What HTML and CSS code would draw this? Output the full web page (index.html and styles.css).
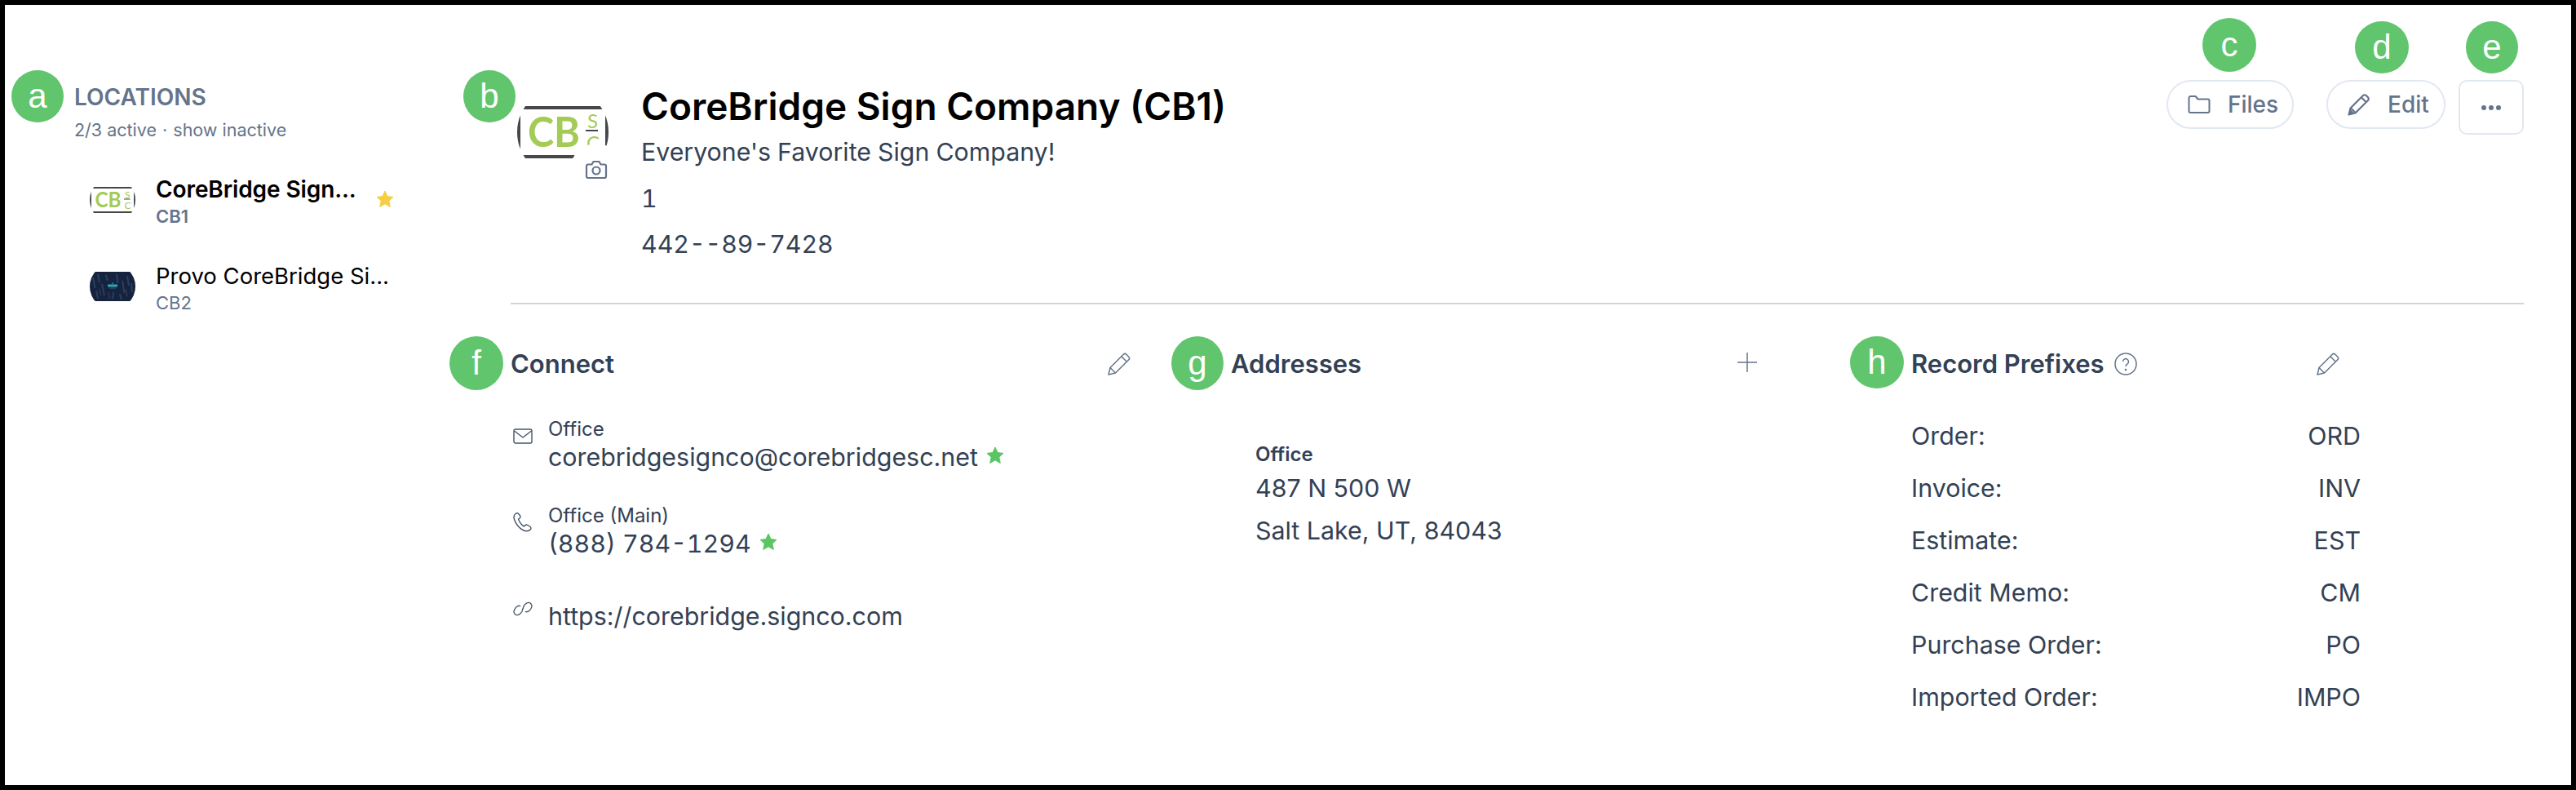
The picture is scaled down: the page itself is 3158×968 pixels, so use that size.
FILE: index.html
```html
<!doctype html>
<html>
<head>
<title>Locations</title>
<meta charset="utf-8">
<link rel="stylesheet" href="styles.css">
</head>
<body>
<svg class="defs" width="0" height="0">
	<defs>
		<clipPath id="round"><circle cx="56" cy="56" r="56"></circle></clipPath>
		<symbol id="logo-cb" viewBox="0 0 112 112">
			<g clip-path="url(#round)">
				<rect x="2" y="26" width="108" height="60" fill="#fff" stroke="#45474a" stroke-width="4"></rect>
				<text x="13" y="74" class="logo-big" textLength="64" lengthAdjust="spacingAndGlyphs">CB</text>
				<text x="86" y="51" class="logo-small">S</text>
				<rect x="84" y="53" width="15" height="2" fill="#45474a"></rect>
				<text x="85" y="78" class="logo-small">C</text>
			</g>
		</symbol>
		<symbol id="pencil" viewBox="0 0 28 28">
			<path d="M1 27l2-8.500L19.300 2.200a2.500 2.500 0 0 1 3.500 0l3 3a2.500 2.500 0 0 1 0 3.500L9.500 25zM3 18.500l6.500 6.500M16.800 4.700l6.500 6.500" fill="none" stroke="currentColor" stroke-width="1.500" stroke-linejoin="round"></path>
		</symbol>
		<symbol id="pencil-solid" viewBox="0 0 28 28">
			<path d="M1.500 26.500l2-8L19 3a2.600 2.600 0 0 1 3.700 0l2.300 2.300a2.600 2.600 0 0 1 0 3.700L9.500 24.500zM4 18.500l5.500 5.500M16.800 5.200l6 6" fill="none" stroke="currentColor" stroke-width="2.200" stroke-linejoin="round"></path>
			<path d="M2 26l1.500-6 4.500 4.500z" fill="currentColor"></path>
		</symbol>
		<symbol id="star" viewBox="0 0 22 22">
			<path d="M11 1l3 6.600 7 .8-5.200 4.800 1.500 7.200L11 16.800l-6.300 3.600 1.500-7.200L1 8.400l7-.8z" fill="currentColor" stroke="currentColor" stroke-linejoin="round"></path>
		</symbol>
	</defs>
</svg>

<div class="frame">
	<span class="badge badge-a">a</span>
	<span class="badge badge-b">b</span>
	<span class="badge badge-c">c</span>
	<span class="badge badge-d">d</span>
	<span class="badge badge-e">e</span>
	<span class="badge badge-f">f</span>
	<span class="badge badge-g">g</span>
	<span class="badge badge-h">h</span>

	<aside class="sidebar">
		<h2 class="side-title">LOCATIONS</h2>
		<p class="side-sub">2/3 active <span class="dot">·</span> show inactive</p>

		<div class="loc">
			<svg class="loc-logo"><use href="#logo-cb"></use></svg>
			<div class="loc-text">
				<div class="loc-name loc-current">CoreBridge Sign...</div>
				<div class="loc-code loc-code-current">CB1</div>
			</div>
			<svg class="loc-star"><use href="#star"></use></svg>
		</div>

		<div class="loc">
			<svg class="loc-logo" viewBox="0 0 112 112">
				<g clip-path="url(#round)">
					<rect x="0" y="20" width="112" height="72" fill="#15233f"></rect>
					<path d="M8 34l5 26M20 26l4 20M30 50l6 28M40 28l3 14M66 26l3 22M80 42l5 30M92 30l4 24M102 48l2 22M16 66l4 20M58 70l-2 16M74 74l3 14" stroke="#2a3f5e" stroke-width="4"></path>
					<path d="M24 62l3 16M46 70l3 16M88 62l4 18" stroke="#3f3446" stroke-width="3"></path>
					<rect x="44" y="51" width="24" height="6" fill="#35a3b3"></rect>
					<rect x="48" y="59" width="16" height="2" fill="#24697c"></rect>
					<rect x="54" y="46" width="4" height="4" fill="#24697c"></rect>
				</g>
			</svg>
			<div class="loc-text">
				<div class="loc-name">Provo CoreBridge Si...</div>
				<div class="loc-code">CB2</div>
			</div>
		</div>
	</aside>

	<main class="content">
		<header class="head">
			<div class="head-logo">
				<svg class="big-logo"><use href="#logo-cb"></use></svg>
				<span class="camera">
					<svg width="28" height="24" viewBox="0 0 28 24" fill="none" stroke="currentColor" stroke-width="2.200" stroke-linejoin="round"><path d="M2 7.500a2 2 0 0 1 2-2h4.500l2-3.500h7l2 3.500H24a2 2 0 0 1 2 2V20a2 2 0 0 1-2 2H4a2 2 0 0 1-2-2z"></path><circle cx="14" cy="13" r="4.500"></circle></svg>
				</span>
			</div>
			<div class="head-text">
				<h1>CoreBridge Sign Company (CB1)</h1>
				<p>Everyone's Favorite Sign Company!</p>
				<p>1</p>
				<p>442--89-7428</p>
			</div>
			<div class="actions">
				<a class="pill pill-files" href="#">
					<svg width="28" height="22" viewBox="0 0 28 22" fill="none" stroke="currentColor" stroke-width="2" stroke-linejoin="round"><path d="M1.500 3a2 2 0 0 1 2-2h6l3 3.500h12a2 2 0 0 1 2 2V19a2 2 0 0 1-2 2h-21a2 2 0 0 1-2-2z"></path></svg>
					Files
				</a>
				<a class="pill pill-edit" href="#">
					<svg width="28" height="28"><use href="#pencil-solid"></use></svg>
					Edit
				</a>
				<a class="more" href="#"><i></i><i></i><i></i></a>
			</div>
		</header>

		<hr class="rule">

		<div class="cols">
			<section class="col-connect">
				<div class="col-head">
					<h3>Connect</h3>
					<svg class="tool" width="28" height="28"><use href="#pencil"></use></svg>
				</div>
				<div class="contact contact-first">
					<svg class="contact-icon" width="24" height="24" viewBox="0 0 24 24" fill="none" stroke="currentColor" stroke-width="1.400" stroke-linejoin="round"><rect x="1" y="4" width="22" height="17" rx="2"></rect><path d="M1.500 6l10.500 8 10.500-8"></path></svg>
					<div>
						<div class="contact-label">Office</div>
						<div class="contact-value">corebridgesignco@corebridgesc.net <svg class="mini-star"><use href="#star"></use></svg></div>
					</div>
				</div>
				<div class="contact">
					<svg class="contact-icon" width="24" height="24" viewBox="0 0 24 24" fill="none" stroke="currentColor" stroke-width="1.400" stroke-linejoin="round"><path d="M3 1.500c-2 1.500-2.500 4-1.500 7 1.500 5 6 11 11.500 13.500 3 1 6 1 8-1 1.500-1.500 1-3-.5-4l-2.500-1.500c-1.500-.8-2.500-.5-3.500.5l-1 1c-3-1.500-5.500-5-7-9l1.500-1c1-.8 1.200-1.800.7-3L7 2c-.8-1.500-2.500-1.500-4-.5z"></path></svg>
					<div>
						<div class="contact-label">Office (Main)</div>
						<div class="contact-value contact-num">(888) 784-1294 <svg class="mini-star"><use href="#star"></use></svg></div>
					</div>
				</div>
				<div class="contact">
					<svg class="contact-icon" width="24" height="24" viewBox="0 0 26 24" fill="none" stroke="currentColor" stroke-width="1.400"><path d="M10 8.500c-2-1-4.500-.5-6.500 2C1 13.500.5 17 2.500 19s5 1.500 7.500-1c2-2 3-4.500 2.500-6.500"></path><path d="M16 15.500c2 1 4.500.5 6.500-2C25 10.500 25.500 7 23.500 5s-5-1.500-7.500 1c-2 2-3 4.500-2.500 6.500"></path></svg>
					<div class="contact-value contact-plain">https://corebridge.signco.com</div>
				</div>
			</section>

			<section class="col-address">
				<div class="col-head">
					<h3>Addresses</h3>
					<svg class="tool" width="24" height="24" viewBox="0 0 24 24" stroke="currentColor" stroke-width="1.500"><path d="M12 0v24M0 12h24"></path></svg>
				</div>
				<div class="address">
					<div class="address-label">Office</div>
					<div>487 N 500 W</div>
					<div>Salt Lake, UT, 84043</div>
				</div>
			</section>

			<section class="col-prefix">
				<div class="col-head">
					<h3>Record Prefixes
						<svg class="help" width="28" height="28" viewBox="0 0 28 28" fill="none" stroke="currentColor" stroke-width="1.500"><circle cx="14" cy="14" r="13"></circle><path d="M10.500 11a3.500 3.500 0 1 1 5.500 3c-1.300.8-2 1.500-2 3"></path><circle cx="14" cy="21" r=".6"></circle></svg>
					</h3>
					<svg class="tool" width="28" height="28"><use href="#pencil"></use></svg>
				</div>
				<dl class="prefixes">
					<div><dt>Order:</dt><dd>ORD</dd></div>
					<div><dt>Invoice:</dt><dd>INV</dd></div>
					<div><dt>Estimate:</dt><dd>EST</dd></div>
					<div><dt>Credit Memo:</dt><dd>CM</dd></div>
					<div><dt>Purchase Order:</dt><dd>PO</dd></div>
					<div><dt>Imported Order:</dt><dd>IMPO</dd></div>
				</dl>
			</section>
		</div>
	</main>
</div>
</body>
</html>
```

FILE: styles.css
```css
* {
	box-sizing: border-box;
}
body {
	margin: 0;
	font-family: "Inter", "Liberation Sans", sans-serif;
	color: #334155;
	background: #fff;
}
h1, h2, h3, p, dl, dd {
	margin: 0;
}
a {
	color: inherit;
	text-decoration: none;
}
.defs {
	position: absolute;
}
.frame {
	position: relative;
	display: flex;
	height: 968px;
	border: 6px solid #000;
	background: #fff;
}

/* green letters laid over the screenshot */
.badge {
	position: absolute;
	display: flex;
	align-items: center;
	justify-content: center;
	width: 64px;
	height: 64px;
	border-radius: 50%;
	background: #60c56c;
	color: #fff;
	font-family: "Liberation Sans", sans-serif;
	font-size: 42px;
	z-index: 2;
}
.badge-a { left: 8px; top: 80px; }
.badge-b { left: 562px; top: 80px; }
.badge-c { left: 2694px; top: 16px; width: 66px; height: 66px; }
.badge-d { left: 2881px; top: 20px; width: 66px; }
.badge-e { left: 3017px; top: 20px; }
.badge-f { left: 545px; top: 406px; width: 66px; height: 66px; }
.badge-g { left: 1430px; top: 406px; height: 66px; }
.badge-h { left: 2262px; top: 406px; width: 66px; }

/* left column */
.sidebar {
	flex: none;
	width: 620px;
	padding: 96px 0 0 85px;
}
.side-title {
	font-size: 28px;
	line-height: 34px;
	font-weight: 600;
	color: #64748b;
}
.side-sub {
	margin-top: 9px;
	font-size: 21.500px;
	line-height: 28px;
	color: #64748b;
}
.dot {
	margin: 0 1px;
}
.loc {
	display: flex;
	margin: 44px 0 0 19px;
}
.loc + .loc {
	margin-top: 44px;
}
.loc-logo {
	flex: none;
	width: 56px;
	height: 56px;
}
.loc-text {
	margin: -2px 0 0 25px;
}
.loc-name {
	font-size: 27.500px;
	line-height: 34px;
	color: #000;
}
.loc-current {
	font-size: 28px;
	font-weight: 600;
	letter-spacing: -.1px;
}
.loc-code {
	margin-top: 2px;
	font-size: 22px;
	line-height: 28px;
	color: #64748b;
}
.loc-code-current {
	font-weight: 600;
}
.loc-star {
	flex: none;
	width: 22px;
	height: 22px;
	margin: 16px 0 0 24px;
	color: #f6ce46;
}
.logo-big {
	font-family: "Lato", sans-serif;
	font-weight: 700;
	font-size: 52px;
	fill: #a4cb55;
}
.logo-small {
	font-family: "Lato", sans-serif;
	font-size: 24px;
	fill: #a4cb55;
}

/* right side */
.content {
	flex: 1;
	min-width: 0;
	padding: 92px 58px 0 0;
}
.head {
	display: flex;
	align-items: flex-start;
	padding-left: 8px;
}
.head-logo {
	position: relative;
	flex: none;
	width: 112px;
	height: 112px;
	margin-top: 8px;
}
.big-logo {
	width: 112px;
	height: 112px;
}
.camera {
	position: absolute;
	left: 65px;
	top: 70px;
	display: flex;
	align-items: center;
	justify-content: center;
	width: 64px;
	height: 64px;
	border-radius: 50%;
	background: #fff;
	color: #64748b;
}
.head-text {
	margin: 4px 0 0 40px;
}
.head-text h1 {
	font-size: 46px;
	line-height: 56px;
	font-weight: 600;
	color: #000;
}
.head-text p {
	font-size: 30.300px;
	line-height: 56.500px;
	font-variant-numeric: tabular-nums;
}
.actions {
	display: flex;
	align-items: flex-start;
	margin-left: auto;
}
.pill {
	display: flex;
	align-items: center;
	gap: 21px;
	height: 60px;
	padding: 0 0 0 24px;
	border: 2px solid #e2e8f0;
	border-radius: 30px;
	font-size: 28px;
	font-weight: 500;
	color: #64748b;
}
.pill svg {
	flex: none;
}
.pill-files {
	width: 156px;
}
.pill-edit {
	width: 146px;
	margin-left: 40px;
}
.more {
	display: flex;
	align-items: center;
	justify-content: center;
	gap: 3px;
	width: 80px;
	height: 67px;
	margin-left: 16px;
	border: 2px solid #e2e8f0;
	border-radius: 10px;
}
.more i {
	width: 6px;
	height: 6px;
	border-radius: 50%;
	background: #64748b;
}
.rule {
	height: 2px;
	margin: 43px 0 0;
	border: 0;
	background: #d1d5db;
}
.cols {
	display: grid;
	grid-template-columns: 883px 834px 1fr;
	margin-top: 53px;
}
.col-head {
	display: flex;
	align-items: flex-start;
	justify-content: space-between;
}
.col-head h3 {
	display: flex;
	align-items: center;
	gap: 12px;
	font-size: 31px;
	line-height: 40px;
	font-weight: 600;
}
.col-connect .col-head { width: 760px; }
.col-address .col-head { width: 645px; }
.col-prefix .col-head { width: 525px; }
.tool {
	flex: none;
	margin-top: 6px;
	color: #64748b;
}
.help {
	color: #64748b;
}
.contact {
	display: flex;
	margin-top: 39px;
}
.contact-first {
	margin-top: 45px;
}
.contact-icon {
	flex: none;
	margin: 11px 19px 0 3px;
	color: #475569;
}
.contact-label {
	font-size: 24px;
	line-height: 30px;
}
.contact-value {
	margin-top: 1px;
	font-size: 30.400px;
	line-height: 36px;
}
.contact-num {
	font-variant-numeric: tabular-nums;
}
.contact-plain {
	margin-top: 14px;
}
.mini-star {
	width: 22px;
	height: 22px;
	margin-left: 2px;
	vertical-align: 2px;
	color: #5cc463;
}
.address {
	margin: 76px 0 0 30px;
	font-size: 30.400px;
	line-height: 52px;
}
.address-label {
	font-size: 24px;
	line-height: 30px;
	font-weight: 600;
}
.prefixes {
	width: 551px;
	margin-top: 36px;
	font-size: 30.400px;
	line-height: 64px;
}
.prefixes div {
	display: flex;
	justify-content: space-between;
}
```
